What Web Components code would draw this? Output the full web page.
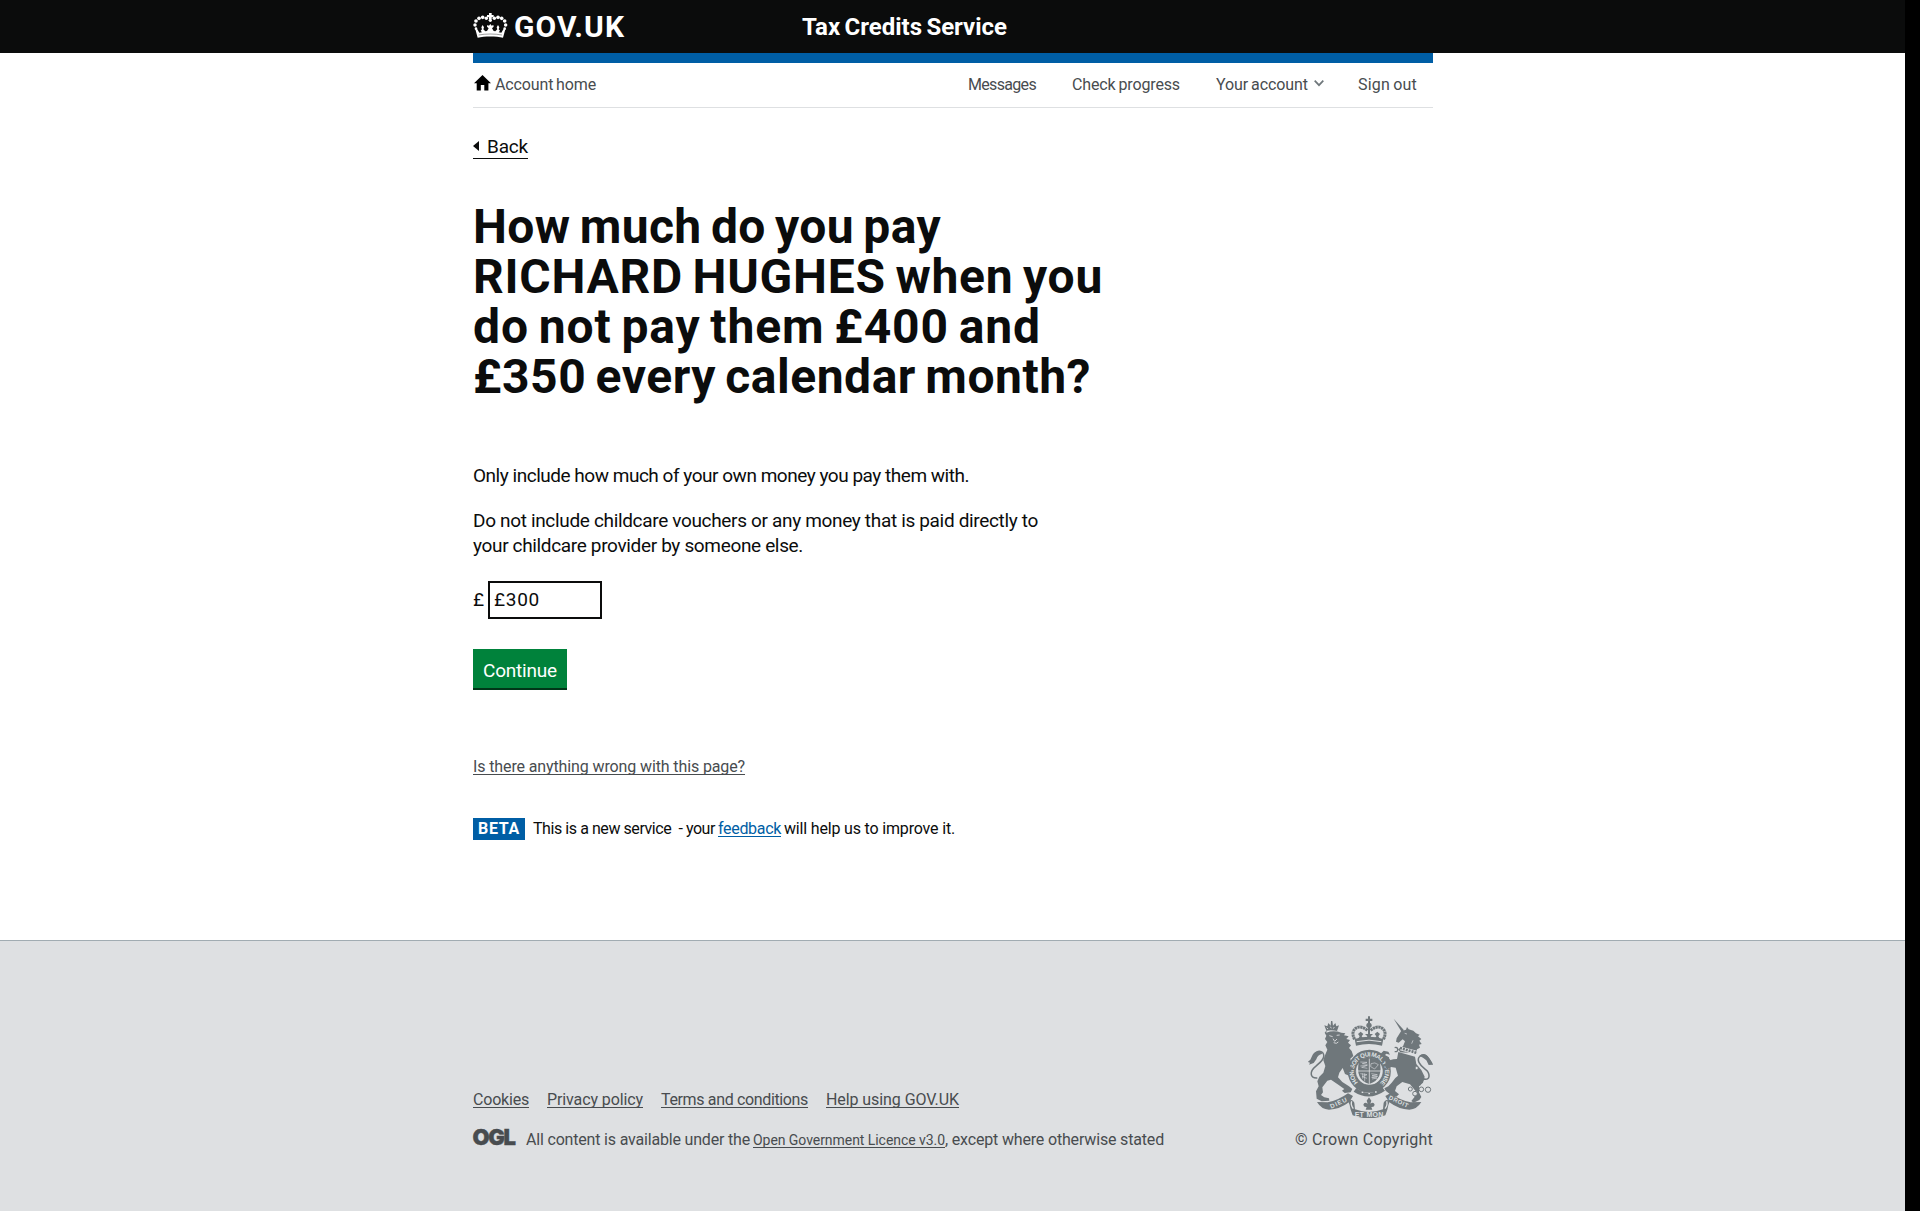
<!DOCTYPE html>
<html lang="en">
<head>
<meta charset="utf-8">
<title>Tax Credits Service</title>
<style>
html{background:#000}
body{margin:0;width:1905px;height:1211px;background:#fff;color:#0b0c0c;font-family:Roboto,"Liberation Sans",sans-serif;overflow:hidden}
</style>
</head>
<body>
<tax-page></tax-page>
<script>
function define(name, html, ready) {
  const t = document.createElement('template');
  t.innerHTML = html;
  customElements.define(name, class extends HTMLElement {
    constructor() {
      super();
      this.attachShadow({mode: 'open'}).append(t.content.cloneNode(true));
    }
    connectedCallback() { if (ready) ready(this); }
  });
}

/* One line of text tracked so that it fills the measure given in "w". */
define('fit-text', `<style>
:host{display:inline-block;white-space:pre;flex:none}
span{display:inline-block}
:host([u]) span{text-decoration:underline;text-decoration-thickness:1px;text-underline-offset:2px;text-decoration-skip-ink:none}
</style><span><slot></slot></span>`, el => {
  const w = +el.getAttribute('w'), s = el.shadowRoot.querySelector('span');
  el.style.width = w + 'px';
  const fit = () => {
    s.style.letterSpacing = '0px';
    const nat = s.getBoundingClientRect().width;
    s.style.letterSpacing = ((w - nat) / el.textContent.length) + 'px';
  };
  fit();
  document.fonts.ready.then(fit);
});

define('crown-logo', `<style>:host{display:block;width:35px;height:27px}svg{display:block}</style>
<svg width="35" height="27" viewBox="24 21 105 81" fill="#fff">
<path d="M72 24h8v6h6v7h-6v6h-8v-6h-6v-7h6z"/>
<circle cx="76" cy="46" r="5"/>
<circle cx="64" cy="40" r="5.2"/><circle cx="53" cy="37" r="5.5"/><circle cx="42" cy="40" r="5.5"/><circle cx="33" cy="48" r="5.5"/><circle cx="30" cy="60" r="5.2"/><circle cx="33" cy="71" r="4"/>
<circle cx="88" cy="40" r="5.2"/><circle cx="99" cy="37" r="5.5"/><circle cx="110" cy="40" r="5.5"/><circle cx="119" cy="48" r="5.5"/><circle cx="122" cy="60" r="5.2"/><circle cx="119" cy="71" r="4"/>
<path d="M31 73l6 0 6 10 8-1-4-5 4-4-2-6 4-7 4 7-2 6 6 6 5-1 5-8-5-5 1-5 5 2 4-5 4 5 5-2 1 5-5 5 5 8 5 1 6-6-2-6 4-7 4 7-2 6 4 4-4 5 8 1 6-10h6l-7 25c-20-5-56-5-76 0z"/>
<path d="M41 90c20-4 50-4 70 0" fill="none" stroke="#0b0c0c" stroke-width="1.2"/>
</svg>`);

define('site-header', `<style>
:host{display:flex;box-sizing:border-box;height:53px;background:#0b0c0c;color:#fff;padding-left:473px;font-weight:700;align-items:flex-start}
crown-logo{margin-top:12px}
.g{font-size:30px;line-height:36px;margin:9px 0 0 6px}
.t{font-size:24px;line-height:30px;margin:12px 0 0 177px;word-spacing:-1.5px}
</style><crown-logo></crown-logo><fit-text class="g" w="111">GOV.UK</fit-text><fit-text class="t" w="205">Tax Credits Service</fit-text>`);

define('account-nav', `<style>
:host{display:flex;box-sizing:border-box;height:55px;width:960px;border-top:10px solid #005ea5;border-bottom:1px solid #dee0e2;font-size:16px;line-height:20px;color:#484c4f;padding-top:12px;word-spacing:-1px}
.h{margin:0 4px 0 1px}
nav{display:flex;margin-left:auto;padding-right:16px}
nav>*{margin-left:36px}
nav .c{margin:5px 0 0 6px}
</style>
<svg class="h" width="17" height="16" viewBox="0 0 17 16"><path d="M8.5 0L17 8.3H14.4V15.6H10.3V10H6.8V15.6H2.7V8.3H0z" fill="#000"/></svg>
<fit-text w="101">Account home</fit-text>
<nav><fit-text w="68">Messages</fit-text><fit-text w="108">Check progress</fit-text><fit-text w="92">Your account</fit-text><svg class="c" width="10" height="7" viewBox="0 0 10 7"><path d="M.7.7L5 5.2 9.3.7" fill="none" stroke="#6f777b" stroke-width="1.7"/></svg><fit-text style="margin-left:34px" w="59">Sign out</fit-text></nav>`);

define('back-link', `<style>
:host{display:flex;width:55px;height:24px;border-bottom:1px solid #0b0c0c;font-size:19px;line-height:25px;align-items:flex-start}
svg{margin:7px 8px 0 0}
</style><svg width="6" height="10" viewBox="0 0 6 10"><path d="M6 0v10L0 5z" fill="#0b0c0c"/></svg><fit-text w="41">Back</fit-text>`);

define('page-title', `<style>
:host{display:flex;flex-direction:column;font-size:48px;line-height:50px;font-weight:700;word-spacing:-3px}
h1{font:inherit;margin:0;display:flex;flex-direction:column}
</style><h1><fit-text w="468">How much do you pay</fit-text><fit-text w="630">RICHARD HUGHES when you</fit-text><fit-text w="568">do not pay them £400 and</fit-text><fit-text w="618">£350 every calendar month?</fit-text></h1>`);

define('money-form', `<style>
:host{display:flex;flex-direction:column;align-items:flex-start;font-size:19px;line-height:25px}
.p2{margin-top:20px}
.row{display:flex;margin-top:23px;height:38px}
.row>fit-text{margin:6px 5px 0 0}
.in{box-sizing:border-box;width:114px;height:38px;border:2px solid #0b0c0c;padding:4px 0 0 4px}
.b{margin-top:30px;width:94px;height:39px;box-sizing:border-box;background:#00823b;box-shadow:0 2px 0 #003618;color:#fff;padding:9px 0 0 10px}
</style>
<fit-text w="496">Only include how much of your own money you pay them with.</fit-text>
<fit-text class="p2" w="565">Do not include childcare vouchers or any money that is paid directly to</fit-text>
<fit-text w="330">your childcare provider by someone else.</fit-text>
<div class="row"><fit-text w="10">£</fit-text><div class="in"><fit-text w="46">£300</fit-text></div></div>
<div class="b" role="button"><fit-text w="74">Continue</fit-text></div>`);

define('beta-banner', `<style>
:host{display:flex;height:22px;font-size:16px;line-height:20px;color:#0b0c0c}
b{background:#005ea5;color:#fff;width:52px;box-sizing:border-box;padding:1px 0 0 5px;margin-right:8px;height:22px}
.l{color:#005ea5;margin:1px 3px 0 3px}
.k{margin-top:1px}
</style><b><fit-text w="42">BETA</fit-text></b><fit-text class="k" w="182">This is a new service  - your</fit-text><fit-text u class="l" w="63">feedback</fit-text><fit-text class="k" w="171">will help us to improve it.</fit-text>`);

define('royal-arms', `<style>:host{display:block;width:125px;height:102px}svg{display:block}text{font-family:"Liberation Sans",sans-serif;font-weight:700;fill:#dee0e2}</style>
<svg width="125" height="102" viewBox="84 47 375 306" fill="#6f777b" stroke-linejoin="round">
<g id="crown">
<path d="M264 48h6v7h7v7h-7v9h-6v-9h-7v-7h7z"/><circle cx="267" cy="75" r="8"/>
<path d="M224 117C206 86 239 67 263 91M310 117C328 86 295 67 271 91" fill="none" stroke="#6f777b" stroke-width="9" stroke-dasharray="7 1.5"/>
<path d="M264 80h6v34h-6z"/><path d="M234 116l5-8-5-7 8-7 8 7-5 7 5 8zM284 116l5-8-5-7 8-7 8 7-5 7 5 8zM258 116l4-8-7-7h24l-7 7 4 8z"/>
<path d="M224 116q43-13 86 0l-4 20q-39-10-78 0z"/><path d="M230 124q37-9 74 0" stroke="#dee0e2" stroke-width="3" fill="none"/>
</g>
<g id="garter">
<circle cx="268" cy="213" r="52" fill="none" stroke="#6f777b" stroke-width="25"/>
<circle cx="268" cy="213" r="39.5" fill="none" stroke="#dee0e2" stroke-width="1.6"/>
<path id="arc" d="M234 246A47 46 0 1 1 302 246" fill="none"/>
<text font-size="18.5"><textPath href="#arc" textLength="220" lengthAdjust="spacing">HONI SOIT QUI MAL Y PENSE</textPath></text>
<path d="M238 178q30-11 60 0 15 58-30 73-45-13-30-73z"/>
<path d="M268 175v76M233 212h70" stroke="#dee0e2" stroke-width="2.4"/>
<path d="M241 185l20 1-14 4 15 2M241 197l21-2-17 6 17 3M273 190q12-6 22 3l-11 13-12-7zM241 220l20 3-14 6 14 5M248 219v16M254 219v24M274 220l18 3-16 3 17 2-18 3 16 2-15 3" stroke="#dee0e2" stroke-width="1.7" fill="none"/>
<path d="M229 263q39 31 78-2l8 10q-47 33-94 3z"/><path d="M245 276h5M265 280h5M285 275h5" stroke="#dee0e2" stroke-width="4"/>
</g>
<g id="lion">
<path d="M139 91l-6-16 9 3 3-10 7 8 1-14 4 0 2 14 7-8 3 10 8-3-6 17q-16-4-32-1z"/>
<path d="M140 82l4 4M151 79l3 5M163 80l-3 5" stroke="#dee0e2" stroke-width="2.5"/>
<path d="M139 97q22-8 45 0l12 2-4 6 14 3-7 8 11 3-6 8 9 8-6 8 8 9 5 15-9 8 3 13-5 9 9 6-5 10-8 4 4 10-14-6-7-18-10 14-4 14 13 14 20 13 10 8-5 10-18 2-8-7 7-5-18-13-22-15-11 3-15 20 2 15-6 8 10 7 14 3 1 7-23 2-15-8-2-22 8-15-4-15 6-14 12-12 6-20-6-17 4-13 8-19-6-13 6-10-7-9 4-10-5-9 6-7z"/>
<path d="M148 106l10 3M170 105l9-1M159 115l5 8 7-7M161 127q9 5 14-2" fill="none" stroke="#dee0e2" stroke-width="2.6"/>
<path d="M112 233C88 235 89 212 107 198C125 183 138 170 128 157C115 146 102 160 98 178" fill="none" stroke="#6f777b" stroke-width="4.5"/>
<path d="M128 157Q111 144 98 163L91 178 83 185l7 2-3 6 14-5 8-11q4-13 16-16z"/>
</g>
<g id="unicorn">
<path d="M341 55l31 35-7 5z"/>
<path d="M363 93l15-5 3-8 5 7 14 4 8 8 11 4-5 5 10 8-6 5 7 10-8 2 3 9-9 5-2 12-48-3-7-9 15-9 6-15-7-6-12 10-8-3 2-10z"/>
<path d="M374 99l7 2M399 120l-4 10" stroke="#dee0e2" stroke-width="2"/>
<path d="M361 144l51 14" stroke="#dee0e2" stroke-width="12"/><path d="M360 143l52 15" stroke="#6f777b" stroke-width="8" stroke-dasharray="6 3"/>
<path d="M355 155l50 14 4 22 15 18 10 20-5 18-12 10 0 19 7 14-6 9-17 8-7-5 9-11 3-20-16-19-23-7-17 13-5 14 12 10-8 7-15-4-17-14-4-7 12-6 10-11 11-14 8-7-7-24-14-2-12 8-7-13 4-10-9-7 2-9-9-9 9-9 14 3 5 9-11-3-4 4 12 7 2 9 11-3 11-1z"/>
<path d="M344 142q8-3 9 5t-9 7M329 177l-5 10M412 201l-6 11" fill="none" stroke="#6f777b" stroke-width="4"/>
<path d="M429 235C454 243 450 217 436 207C419 195 407 177 421 167C437 157 448 176 455 190" fill="none" stroke="#6f777b" stroke-width="4.5"/>
<path d="M418 166q17-12 29 7l8 12 5 8-14 1-7-14-10-8z"/>
<path d="M431 236l-13 20" stroke="#6f777b" stroke-width="4"/>
<g fill="#dee0e2" stroke="#6f777b" stroke-width="3"><circle cx="391" cy="266" r="6"/><circle cx="405" cy="280" r="7"/><circle cx="424" cy="267" r="7"/><circle cx="444" cy="268" r="8"/><circle cx="410" cy="203" r="5"/></g>
</g>
<g id="ribbon">
<path d="M111 305l32 1q32-6 61-27l15 8-11 18q-29 22-61 23-23-1-36-23zM424 305l-32 1q-32-6-61-27l-15 8 11 18q29 22 61 23 23-1 36-23z"/>
<path d="M205 303q12-9 18 4l2 20q42 16 84 0l2-20q6-13 18-4-5 12-7 25l-6 17q-49 18-98 0l-6-17q-2-13-7-25z"/>
<path d="M215 303q-4 11 5 22M320 303q4 11-5 22" fill="none" stroke="#dee0e2" stroke-width="4"/>
<path d="M267 291l7 10-3 9q10-7 13 3-1 8-10 7l3 8h-20l3-8q-9 1-10-7 3-10 13-3l-3-9z"/>
<text font-size="19" transform="translate(154 325) rotate(-25)" textLength="53">DIEU</text>
<text font-size="21" x="224" y="349" textLength="86">ET MON</text>
<text font-size="18" transform="translate(325 296) rotate(25)" textLength="62">DROIT</text>
</g>
</svg>`);

define('ogl-mark', `<style>:host{display:block;width:43px;height:18px}svg{display:block;overflow:visible}text{font-family:Inter,sans-serif;font-weight:900;fill:#484c4f;stroke:#484c4f;stroke-width:.4px}</style>
<svg width="43" height="18" viewBox="0 0 43 18"><text x="-.6" y="15.8" font-size="22" textLength="43.5" lengthAdjust="spacing">OGL</text></svg>`);

define('site-footer', `<style>
:host{display:block;box-sizing:border-box;height:271px;border-top:1px solid #a1acb2;background:#dee0e2;color:#484c4f;font-size:16px;line-height:20px;padding:75px 0 0 473px}
.w{display:flex;justify-content:space-between;width:960px}
.l{display:flex;flex-direction:column;padding-top:74px}
.a{display:flex;gap:18px}
.o{display:flex;margin-top:20px}
.o ogl-mark{margin:-1px 10px 0 0}
.o .s{font-size:14px;margin:0 0 0 3px}
.r{display:flex;flex-direction:column;align-items:flex-end}
.r fit-text{margin-top:12px}
</style><div class="w"><div class="l"><div class="a"><fit-text u w="56">Cookies</fit-text><fit-text u w="96">Privacy policy</fit-text><fit-text u w="147">Terms and conditions</fit-text><fit-text u w="133">Help using GOV.UK</fit-text></div>
<div class="o"><ogl-mark></ogl-mark><fit-text w="224">All content is available under the</fit-text><fit-text u class="s" w="192">Open Government Licence v3.0</fit-text><fit-text w="219">, except where otherwise stated</fit-text></div></div>
<div class="r"><royal-arms></royal-arms><fit-text w="138">© Crown Copyright</fit-text></div></div>`);

define('tax-page', `<style>
:host{display:flex;flex-direction:column;height:1211px}
main{flex:1;padding-left:473px;display:flex;flex-direction:column;align-items:flex-start}
back-link{margin-top:26px}
page-title{margin-top:43px}
money-form{margin-top:61px}
.q{font-size:16px;line-height:20px;color:#484c4f;margin-top:69px}
beta-banner{margin-top:41px}
</style><site-header></site-header><main><account-nav></account-nav><back-link></back-link><page-title></page-title><money-form></money-form><fit-text u class="q" w="272">Is there anything wrong with this page?</fit-text><beta-banner></beta-banner></main><site-footer></site-footer>`);
</script>
</body>
</html>
